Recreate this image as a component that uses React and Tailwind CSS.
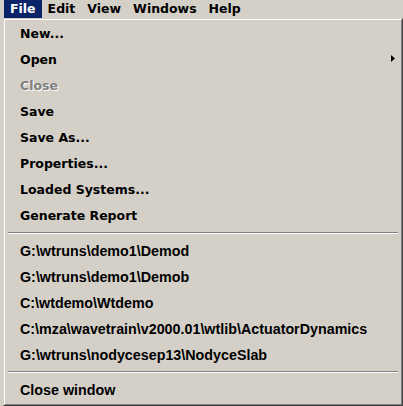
import React from 'react';

const menus = ['File', 'Edit', 'View', 'Windows', 'Help'];

const topItems = [
  { label: 'New...' },
  { label: 'Open', submenu: true },
  { label: 'Close', disabled: true },
  { label: 'Save' },
  { label: 'Save As...' },
  { label: 'Properties...' },
  { label: 'Loaded Systems...' },
  { label: 'Generate Report' },
];

const recentFiles = [
  'G:\\wtruns\\demo1\\Demod',
  'G:\\wtruns\\demo1\\Demob',
  'C:\\wtdemo\\Wtdemo',
  'C:\\mza\\wavetrain\\v2000.01\\wtlib\\ActuatorDynamics',
  'G:\\wtruns\\nodycesep13\\NodyceSlab',
];

const Separator = () => (
  <div className="pt-[3px] pb-[4px] px-[3px]">
    <div className="h-px bg-[#808080]" />
    <div className="h-px bg-white" />
  </div>
);

const MenuItem = ({ label, submenu, disabled, path }) => (
  <div className="h-[26px] flex items-center justify-between pl-[15px] pr-[6px]">
    <span
      className={
        (path
          ? "font-['Liberation_Sans',Arial,sans-serif] text-[14.3px] "
          : "font-['DejaVu_Sans',Verdana,sans-serif] text-[12.5px] ") +
        'font-bold whitespace-nowrap leading-[26px] ' +
        (disabled ? 'text-[#808080] [text-shadow:1px_1px_0_#ffffff]' : 'text-black')
      }
    >
      {label}
    </span>
    {submenu && (
      <svg width="4" height="7" viewBox="0 0 4 7" className="-mt-[3px]">
        <path d="M0 0 L4 3.5 L0 7 Z" fill="#000" />
      </svg>
    )}
  </div>
);

export default function App() {
  return (
    <div className="w-[403px] h-[406px] bg-[#d4d0c8] overflow-hidden flex flex-col select-none">
      <div className="h-[18px] flex items-stretch pl-[4px]">
        {menus.map((m, i) => (
          <div
            key={m}
            className={
              "px-[6px] flex items-center font-['DejaVu_Sans',Verdana,sans-serif] font-bold text-[12.5px] " +
              (i === 0 ? 'bg-[#0a246a] text-white' : 'text-black')
            }
          >
            {m}
          </div>
        ))}
      </div>

      <div className="ml-[3px] w-[400px] h-[388px] border border-t-[#d4d0c8] border-l-[#d4d0c8] border-r-[#404040] border-b-[#404040]">
        <div className="h-full border border-t-white border-l-white border-r-[#808080] border-b-[#808080] pt-px pb-px">
          {topItems.map((it) => (
            <MenuItem key={it.label} {...it} />
          ))}
          <Separator />
          {recentFiles.map((f) => (
            <MenuItem key={f} label={f} path />
          ))}
          <Separator />
          <MenuItem label="Close window" path />
        </div>
      </div>
    </div>
  );
}
